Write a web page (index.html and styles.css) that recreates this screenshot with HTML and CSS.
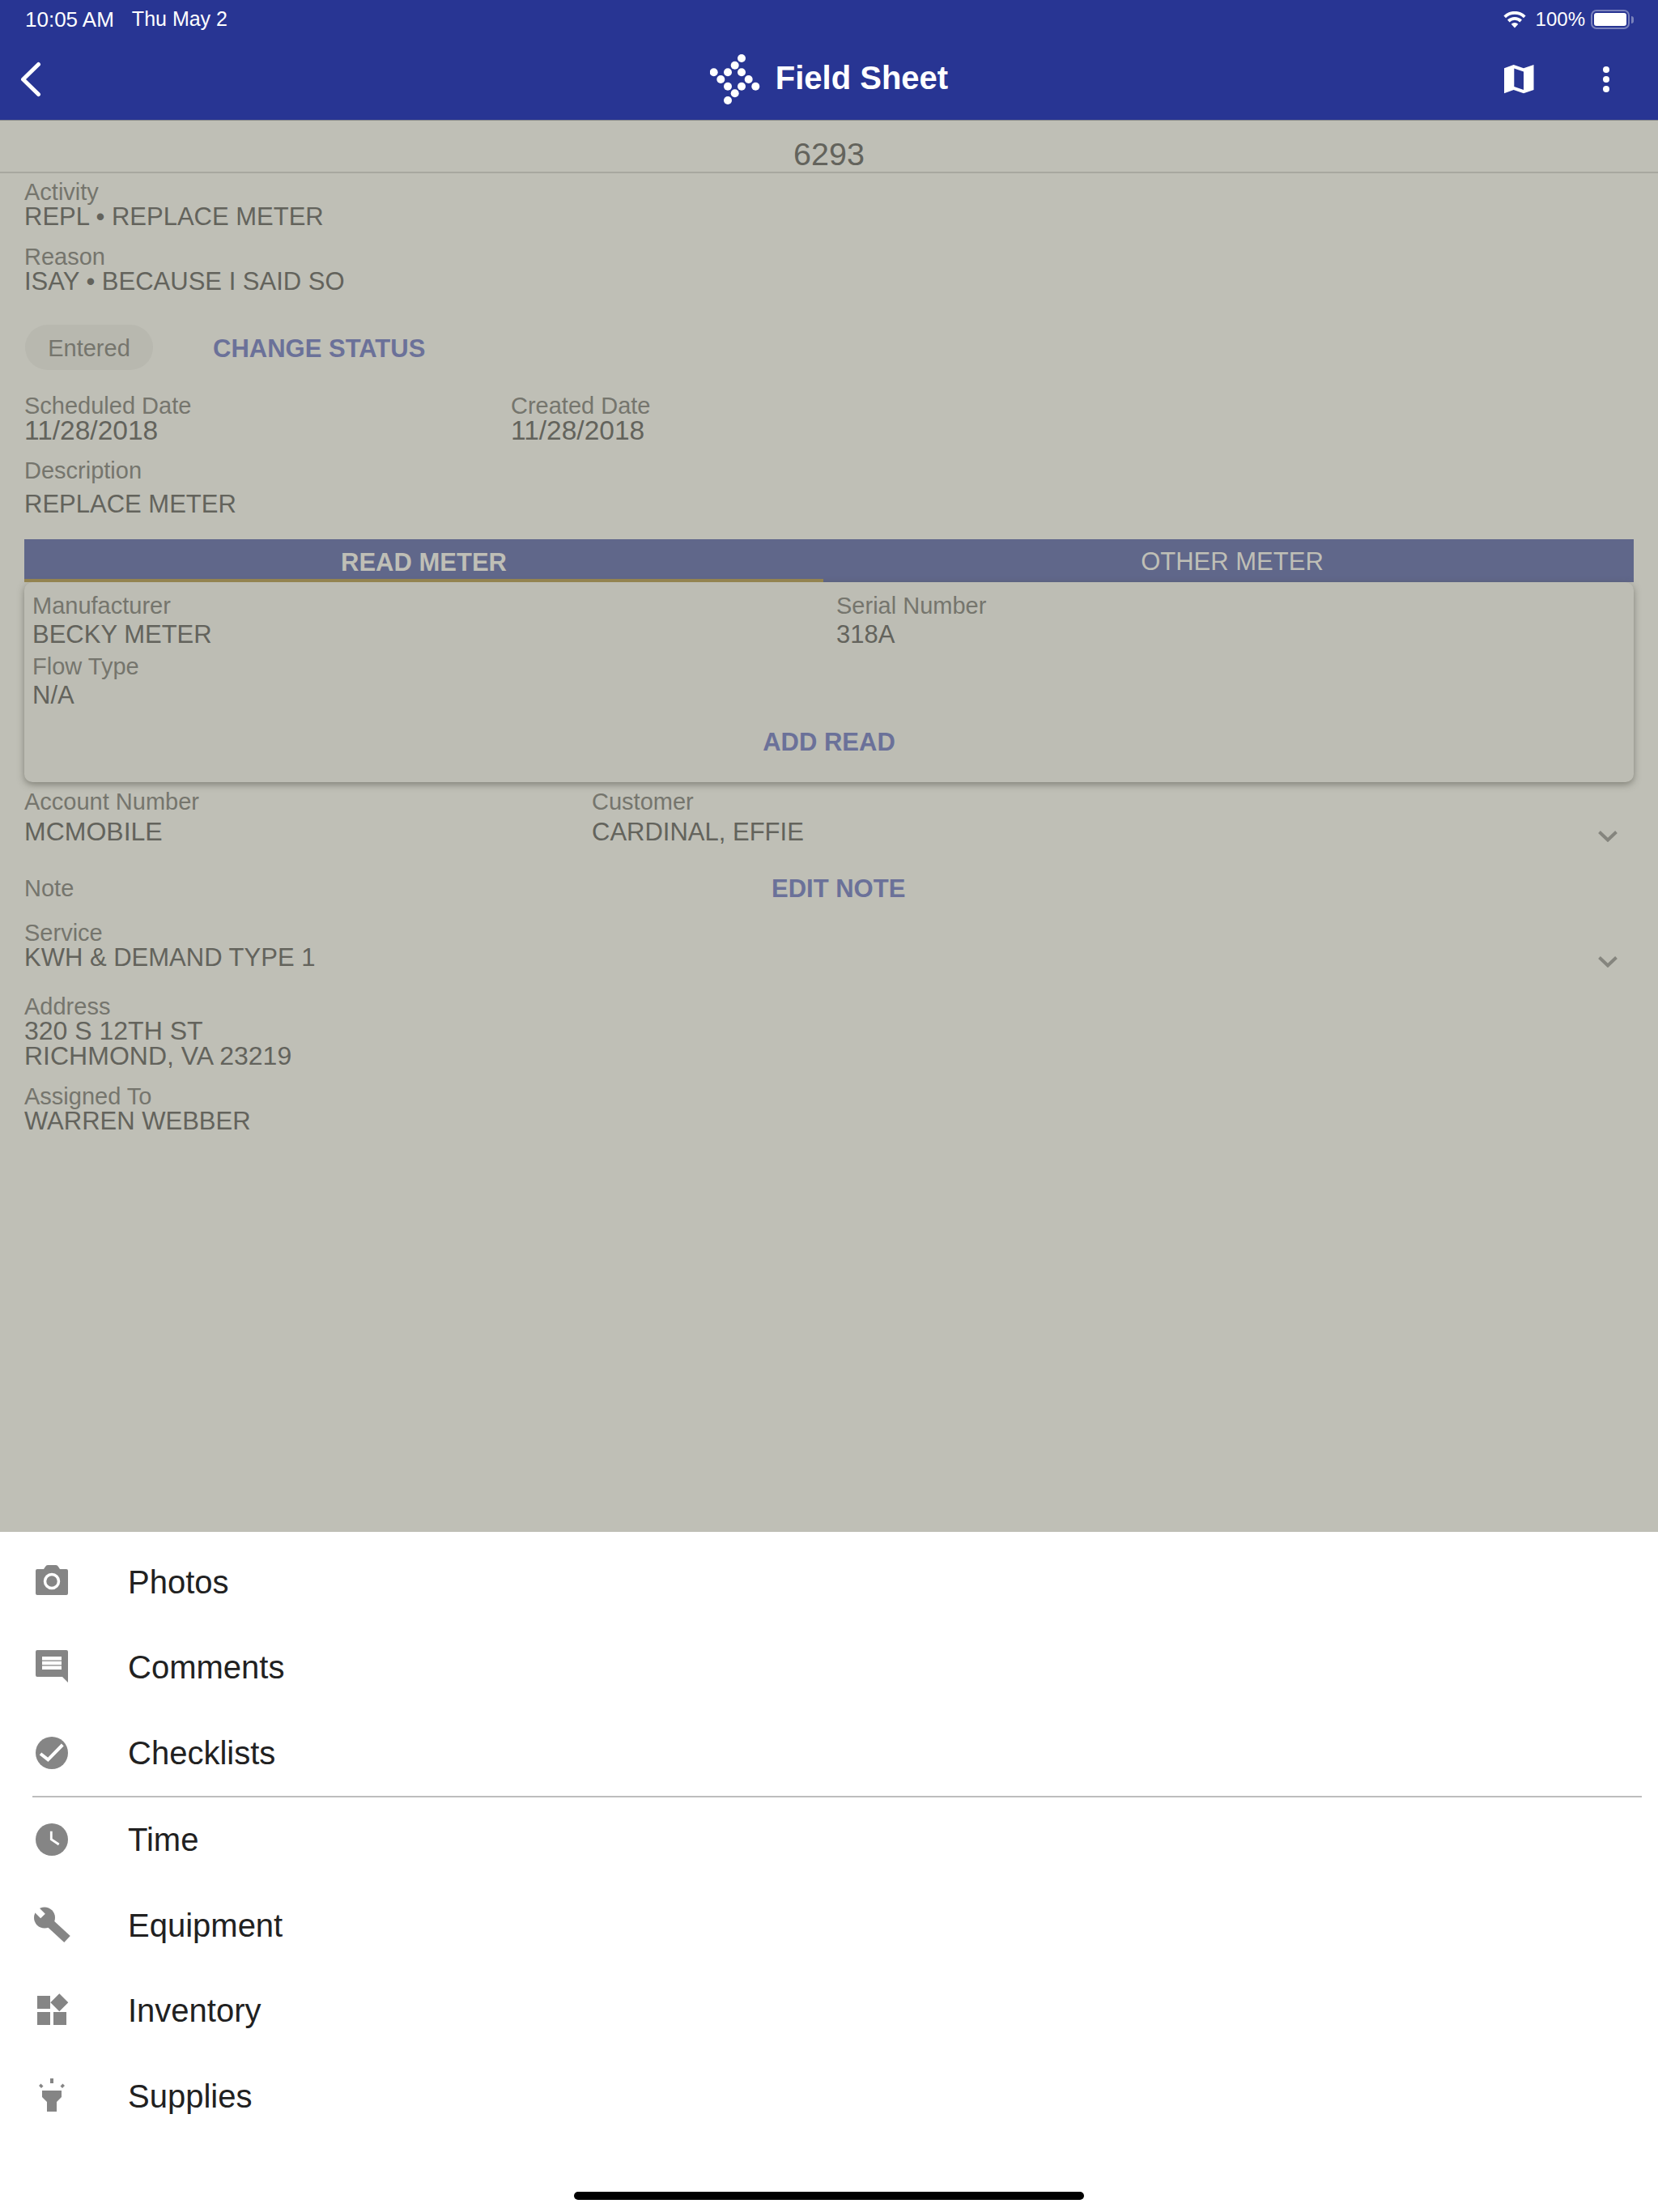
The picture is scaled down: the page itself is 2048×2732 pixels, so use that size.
FILE: index.html
```html
<!DOCTYPE html>
<html lang="en">
<head>
    <meta charset="UTF-8">
    <title>Field Sheet</title>
    <link rel="stylesheet" href="styles.css">
</head>
<body>
    <div class="app">
        <header class="topbar">
            <div class="status-bar">
                <div class="status-left"><span class="status-time">10:05 AM</span><span>Thu May 2</span></div>
                <div class="status-right">
                    <svg class="wifi" viewBox="0 0 28 21"><path d="M14 20.500 9.700 15.800a6.300 6.300 0 0 1 8.600 0zM7.600 13.400 5 10.600a13 13 0 0 1 18 0l-2.600 2.800a9.200 9.200 0 0 0-12.800 0zM3 8.200.4 5.400a19.500 19.500 0 0 1 27.200 0L25 8.200a15.800 15.800 0 0 0-22 0z" fill="#fff"/></svg>
                    <span class="status-pct">100%</span>
                    <span class="battery"><span class="battery-fill"></span></span>
                    <span class="battery-nub"></span>
                </div>
            </div>
            <nav class="nav-bar">
                <svg class="back" viewBox="0 0 28 44"><path d="M23.500 3.500 4.500 22l19 18.500" fill="none" stroke="#fff" stroke-width="5" stroke-linecap="round" stroke-linejoin="round"/></svg>
                <div class="nav-title">
                    <svg class="logo" viewBox="0 0 62 64" fill="#fff">
                        <circle cx="39" cy="6" r="5"/><circle cx="30.700" cy="14.700" r="5"/><circle cx="22" cy="23.300" r="5"/><circle cx="39" cy="23.300" r="5"/><circle cx="4.700" cy="23.300" r="5"/><circle cx="13.300" cy="32" r="5"/><circle cx="47.700" cy="32" r="5"/><circle cx="22" cy="40.700" r="5"/><circle cx="39" cy="40.700" r="5"/><circle cx="56.300" cy="40.700" r="5"/><circle cx="30.700" cy="49.300" r="5"/><circle cx="22" cy="58" r="5"/>
                    </svg>
                    <span class="nav-text">Field Sheet</span>
                </div>
                <div class="nav-actions">
                    <svg class="map-icon" viewBox="0 0 37 36"><path d="M0 4.300 11.700 0 24 4.300 36.500 0v31L24 35.300 11.700 31 0 35.300z" fill="#fff"/><path d="M12.300 4.500 24 8.500V31l-11.700-4z" fill="#283593"/></svg>
                    <svg class="more" viewBox="0 0 10 34" fill="#fff"><circle cx="5" cy="5" r="4"/><circle cx="5" cy="17" r="4"/><circle cx="5" cy="29" r="4"/></svg>
                </div>
            </nav>
        </header>

        <main class="content">
            <div class="order-no">6293</div>
            <div class="details">
                <div class="label">Activity</div>
                <div class="value">REPL • REPLACE METER</div>
                <div class="label mt-reason">Reason</div>
                <div class="value">ISAY • BECAUSE I SAID SO</div>

                <div class="status-row">
                    <span class="chip">Entered</span>
                    <span class="link status-link">CHANGE STATUS</span>
                </div>

                <div class="date-row">
                    <div>
                        <div class="label">Scheduled Date</div>
                        <div class="value value-date">11/28/2018</div>
                    </div>
                    <div>
                        <div class="label">Created Date</div>
                        <div class="value value-date">11/28/2018</div>
                    </div>
                </div>

                <div class="label mt-desc">Description</div>
                <div class="value desc-value">REPLACE METER</div>

                <div class="tabs">
                    <div class="tab active">READ METER</div>
                    <div class="tab other">OTHER METER</div>
                </div>
                <div class="meter-card">
                    <div class="meter-grid">
                        <div>
                            <div class="label">Manufacturer</div>
                            <div class="value meter-value">BECKY METER</div>
                        </div>
                        <div>
                            <div class="label">Serial Number</div>
                            <div class="value meter-value">318A</div>
                        </div>
                    </div>
                    <div class="label mt-flow">Flow Type</div>
                    <div class="value meter-value">N/A</div>
                    <div class="link add-read">ADD READ</div>
                </div>

                <div class="account-row">
                    <div class="account-cols">
                        <div>
                            <div class="label">Account Number</div>
                            <div class="value value-wide account-value">MCMOBILE</div>
                        </div>
                        <div>
                            <div class="label">Customer</div>
                            <div class="value account-value">CARDINAL, EFFIE</div>
                        </div>
                    </div>
                    <svg class="chevron" viewBox="0 0 24 14"><path d="M1.500 1.500 12 11.500l10.500-10" fill="none" stroke="#85857e" stroke-width="4"/></svg>
                </div>

                <div class="note-row">
                    <div class="label">Note</div>
                    <div class="link note-link">EDIT NOTE</div>
                </div>

                <div class="service-row">
                    <div>
                        <div class="label">Service</div>
                        <div class="value">KWH &amp; DEMAND TYPE 1</div>
                    </div>
                    <svg class="chevron" viewBox="0 0 24 14"><path d="M1.500 1.500 12 11.500l10.500-10" fill="none" stroke="#85857e" stroke-width="4"/></svg>
                </div>

                <div class="label mt-address">Address</div>
                <div class="value value-wide">320 S 12TH ST</div>
                <div class="value value-wide">RICHMOND, VA 23219</div>
                <div class="label mt-assigned">Assigned To</div>
                <div class="value">WARREN WEBBER</div>
            </div>
        </main>

        <section class="sheet">
            <div class="sheet-row">
                <svg class="sheet-icon" viewBox="0 0 44 44"><path d="M4 6h8l2-3q1-2 3-2h10q2 0 3 2l2 3h8q2 0 2 2v28q0 2-2 2H4q-2 0-2-2V8q0-2 2-2z" fill="#858585"/><circle cx="22" cy="21" r="8.500" fill="none" stroke="#fff" stroke-width="3.500"/></svg>
                <span>Photos</span>
            </div>
            <div class="sheet-row">
                <svg class="sheet-icon" viewBox="0 0 44 44"><path d="M4 1h36q2 0 2 2v38l-7-7H4q-2 0-2-2V3q0-2 2-2z" fill="#858585"/><path d="M10 9h24v4.500H10zM10 14.800h24v4.400H10zM10 20.500h24V25H10z" fill="#fff"/></svg>
                <span>Comments</span>
            </div>
            <div class="sheet-row">
                <svg class="sheet-icon" viewBox="0 0 44 44"><circle cx="22" cy="22" r="20" fill="#858585"/><path d="M8 23l9.300 7.300L35.300 12" fill="none" stroke="#fff" stroke-width="4"/></svg>
                <span>Checklists</span>
            </div>
            <div class="sheet-divider"></div>
            <div class="sheet-row">
                <svg class="sheet-icon" viewBox="0 0 44 44"><circle cx="22" cy="22" r="20" fill="#858585"/><path d="M21.300 11.700v10L30.700 28" fill="none" stroke="#fff" stroke-width="2.800"/></svg>
                <span>Time</span>
            </div>
            <div class="sheet-row">
                <svg class="sheet-icon" viewBox="0 0 44 44"><circle cx="13" cy="12.500" r="13" fill="#858585"/><path d="M15 15l26 24" stroke="#858585" stroke-width="11"/><path d="M11 10.500-1-1.500" stroke="#fff" stroke-width="8"/></svg>
                <span>Equipment</span>
            </div>
            <div class="sheet-row">
                <svg class="sheet-icon" viewBox="0 0 44 44" fill="#858585"><path d="M4 4h16v16H4zM4 24h16v16H4zM24 24h16v16H24zM31.300 1.300l11 11-11 11-11-11z"/></svg>
                <span>Inventory</span>
            </div>
            <div class="sheet-row">
                <svg class="sheet-icon" viewBox="0 0 44 44" fill="#858585"><path d="M20 0h4v6h-4zM8.500 6.500l3 3-2.500 2.500-3-3zM35.500 6.500l-3 3 2.500 2.500 3-3zM10 15h24v8l-6 6v12H16V29l-6-6z"/></svg>
                <span>Supplies</span>
            </div>
            <div class="home-indicator"></div>
        </section>
    </div>
</body>
</html>
```

FILE: styles.css
```css
* {
    box-sizing: border-box;
}
body {
    margin: 0;
    font-family: "Liberation Sans", Arial, sans-serif;
    background-color: #fff;
}
.app {
    width: 2048px;
    height: 2732px;
    display: flex;
    flex-direction: column;
    overflow: hidden;
}

/* top bar */
.topbar {
    height: 149px;
    background-color: #283593;
    color: #fff;
    border-bottom: 1px solid #8a8c8c;
}
.status-bar {
    height: 48px;
    padding: 0 30px 0 31px;
    display: flex;
    justify-content: space-between;
    align-items: center;
    font-size: 25px;
}
.status-left {
    display: flex;
    gap: 22px;
}
.status-time {
    font-size: 26px;
}
.status-right {
    display: flex;
    align-items: center;
}
.status-pct {
    margin: 0 7px 0 12px;
    font-size: 24px;
}
.wifi {
    width: 28px;
    height: 21px;
}
.battery {
    width: 48px;
    height: 24px;
    padding: 2px;
    border: 2px solid #7a82bb;
    border-radius: 7px;
    display: block;
}
.battery-fill {
    display: block;
    height: 100%;
    background-color: #fff;
    border-radius: 3px;
}
.battery-nub {
    width: 3px;
    height: 9px;
    margin-left: 2px;
    border-radius: 0 3px 3px 0;
    background-color: #7a82bb;
}
.nav-bar {
    height: 100px;
    display: grid;
    grid-template-columns: 1fr auto 1fr;
    align-items: center;
}
.back {
    width: 28px;
    height: 44px;
    margin-left: 24px;
}
.nav-title {
    display: flex;
    align-items: center;
    gap: 19px;
    font-size: 40px;
    font-weight: 700;
}
.nav-text {
    margin-bottom: 4px;
}
.logo {
    width: 62px;
    height: 64px;
}
.nav-actions {
    display: flex;
    justify-content: flex-end;
    align-items: center;
    gap: 84px;
    padding-right: 59px;
}
.map-icon {
    width: 37px;
    height: 36px;
}
.more {
    width: 10px;
    height: 34px;
}

/* main content, dimmed by the sheet */
.content {
    height: 1743px;
    background-color: #bfbfb6;
    color: #63635c;
}
.order-no {
    height: 65px;
    padding-top: 19px;
    border-bottom: 2px solid #a7a79f;
    text-align: center;
    font-size: 39.5px;
    line-height: 44px;
}
.details {
    padding: 8px 30px 0;
}
.label {
    font-size: 29px;
    line-height: 30px;
    color: #75756d;
}
.value {
    font-size: 31px;
    line-height: 31px;
}
.value-wide {
    font-size: 32px;
}
.value-date {
    font-size: 33.5px;
}
.link {
    font-size: 31px;
    line-height: 32px;
    font-weight: 700;
    color: #6b7199;
}
.mt-reason {
    margin-top: 19px;
}
.status-row {
    margin-top: 38px;
    display: flex;
    align-items: center;
    gap: 74px;
}
.status-link {
    margin-top: 3px;
}
.chip {
    width: 158px;
    height: 56px;
    margin-left: 1px;
    padding-top: 1px;
    border-radius: 28px;
    background-color: #b8b8af;
    color: #75756d;
    font-size: 29px;
    line-height: 56px;
    text-align: center;
}
.date-row {
    margin-top: 29px;
    display: grid;
    grid-template-columns: 601px 1fr;
}
.mt-desc {
    margin-top: 19px;
}
.desc-value {
    margin-top: 11px;
}
.tabs {
    margin-top: 28px;
    height: 53px;
    display: grid;
    grid-template-columns: 987px 1fr;
    background-color: #60678a;
    color: #bfbfb6;
    font-size: 31px;
    text-align: center;
}
.tab {
    padding-top: 12px;
    line-height: 32px;
}
.tab.active {
    padding-top: 13px;
    font-weight: 700;
    border-bottom: 4px solid #938350;
}
.tab.other {
    padding-left: 9px;
}
.meter-card {
    height: 247px;
    padding: 14px 10px 0;
    border-radius: 10px;
    background-color: #bdbdb4;
    box-shadow: 0 3px 8px rgba(70, 70, 60, 0.5);
}
.meter-grid {
    display: grid;
    grid-template-columns: 993px 1fr;
}
.meter-value {
    margin-top: 5px;
}
.mt-flow {
    margin-top: 9px;
}
.add-read {
    margin-top: 27px;
    text-align: center;
}
.account-row {
    margin-top: 9px;
    display: flex;
    justify-content: space-between;
    align-items: flex-end;
}
.account-cols {
    display: grid;
    grid-template-columns: 701px 1fr;
    flex: 1;
}
.account-value {
    margin-top: 7px;
}
.chevron {
    width: 24px;
    height: 14px;
    margin-right: 20px;
    margin-bottom: 3px;
}
.note-row {
    margin-top: 37px;
    display: grid;
    grid-template-columns: 923px 1fr;
    align-items: center;
}
.note-link {
    margin-top: 2px;
}
.service-row {
    margin-top: 23px;
    display: flex;
    justify-content: space-between;
    align-items: flex-end;
}
.mt-address {
    margin-top: 30px;
}
.mt-assigned {
    margin-top: 19px;
}

/* bottom sheet */
.sheet {
    flex: 1;
    padding-top: 9px;
    background-color: #fff;
    color: #212121;
    font-size: 40px;
    position: relative;
}
.sheet-row {
    height: 105.5px;
    padding-left: 42px;
    display: flex;
    align-items: center;
    gap: 72px;
}
.sheet-row span {
    padding-top: 1px;
}
.sheet-icon {
    width: 44px;
    height: 44px;
    overflow: visible;
}
.sheet-divider {
    height: 2px;
    margin: 0 20px 0 40px;
    background-color: #bdbdbd;
}
.home-indicator {
    position: absolute;
    left: 709px;
    bottom: 15px;
    width: 630px;
    height: 10px;
    border-radius: 5px;
    background-color: #000;
}
```
